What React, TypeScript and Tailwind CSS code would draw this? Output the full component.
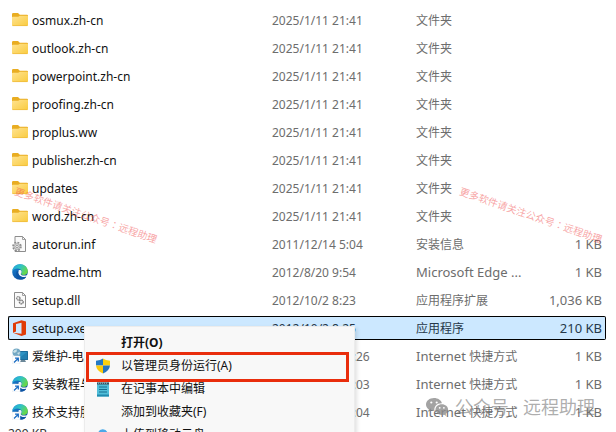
import type { ReactNode } from "react";

type Kind = "folder" | "inf" | "edge" | "dll" | "office" | "remote" | "edgelink";

interface Entry {
  name: string;
  date: string;
  type: string;
  size: string;
  kind: Kind;
  selected?: boolean;
}

const folders = [
  "osmux.zh-cn",
  "outlook.zh-cn",
  "powerpoint.zh-cn",
  "proofing.zh-cn",
  "proplus.ww",
  "publisher.zh-cn",
  "updates",
  "word.zh-cn",
];

const entries: Entry[] = [
  ...folders.map((name): Entry => ({ name, date: "2025/1/11 21:41", type: "文件夹", size: "", kind: "folder" })),
  { name: "autorun.inf", date: "2011/12/14 5:04", type: "安装信息", size: "1 KB", kind: "inf" },
  { name: "readme.htm", date: "2012/8/20 9:54", type: "Microsoft Edge ...", size: "1 KB", kind: "edge" },
  { name: "setup.dll", date: "2012/10/2 8:23", type: "应用程序扩展", size: "1,036 KB", kind: "dll" },
  { name: "setup.exe", date: "2012/10/2 8:25", type: "应用程序", size: "210 KB", kind: "office", selected: true },
  { name: "爱维护-电脑", date: "2024/11/11 10:26", type: "Internet 快捷方式", size: "1 KB", kind: "remote" },
  { name: "安装教程与", date: "2024/11/11 10:03", type: "Internet 快捷方式", size: "1 KB", kind: "edgelink" },
  { name: "技术支持服务", date: "2024/11/11 10:04", type: "Internet 快捷方式", size: "1 KB", kind: "edgelink" },
];

function Svg({ children }: { children: ReactNode }) {
  return (
    <svg viewBox="0 0 16 16" className="size-4 shrink-0" aria-hidden="true">
      {children}
    </svg>
  );
}

function EdgeShape() {
  return (
    <>
      <defs>
        <linearGradient id="edgeTop" x1="0" y1="0" x2="1" y2="0.5">
          <stop offset="0" stopColor="#249fe0" />
          <stop offset="0.5" stopColor="#2fc3c4" />
          <stop offset="1" stopColor="#68d849" />
        </linearGradient>
        <linearGradient id="edgeLow" x1="0" y1="0" x2="0.6" y2="1">
          <stop offset="0" stopColor="#1b8bd8" />
          <stop offset="1" stopColor="#0c4a9c" />
        </linearGradient>
      </defs>
      <circle cx="8" cy="8" r="7.8" fill="url(#edgeLow)" />
      <path d="M.3 7C.8 3 4 .2 8 .2c4.6 0 7.800 3.300 7.800 6.700 0 2.500-1.800 4-4.200 4-1.800 0-2.900-.6-2.500-1.400.3-.5.8-.9.8-1.900C9.900 5.700 7.800 4.400 5.400 4.400 3.100 4.400 1.200 5.400.3 7z" fill="url(#edgeTop)" />
      <path d="M6.300 7.200C5 10.500 8.500 14.300 14.200 12.800L16 15.200V10.500C14.600 11.500 13 11.700 11.600 11.600 8.800 11.500 8.400 9.900 9.100 9.300 10.200 8.300 9.700 6.500 8.300 6.100 7.300 5.900 6.600 6.400 6.300 7.200z" fill="#fff" opacity=".95" />
      <path d="M4.700 7.200C3 11 6 15.300 9.700 15.600c2 .1 3.800-1.200 4.500-2.800C9 14.200 5.500 10.800 6.500 7z" fill="#0d55a5" />
    </>
  );
}

function LinkBadge() {
  return (
    <>
      <rect x="0" y="8" width="8" height="8" fill="#fff" stroke="#d5dde5" strokeWidth=".5" />
      <path d="M2 14.500 5.800 10.700M3 10.200h3.300v3.300" fill="none" stroke="#1d6ec4" strokeWidth="1.300" />
    </>
  );
}

function FileIcon({ kind }: { kind: Kind }) {
  switch (kind) {
    case "folder":
      return (
        <Svg>
          <defs>
            <linearGradient id="folder" x1="0" y1="0" x2="1" y2="1">
              <stop offset="0" stopColor="#ffe391" />
              <stop offset="1" stopColor="#f9cb3f" />
            </linearGradient>
          </defs>
          <path d="M0 2.200Q0 1 1.200 1H6L7.800 2.800H15Q16 2.800 16 4V6H0z" fill="#e9ad22" />
          <path d="M0 5.500Q0 4.800.8 4.800H6.200L8 3.700H15.200Q16 3.700 16 4.500V13Q16 14 15 14H1Q0 14 0 13z" fill="url(#folder)" />
          <path d="M.5 13.600h15" stroke="#eeb93a" strokeWidth=".7" />
        </Svg>
      );
    case "inf":
      return (
        <Svg>
          <path d="M3 .5h7.500L13.500 3.500v12H3z" fill="#fafafa" stroke="#8d8d8d" />
          <path d="M10.500.5v3h3" fill="none" stroke="#8d8d8d" strokeWidth=".8" />
          <circle cx="5" cy="10.500" r="4" fill="#eee" stroke="#8b8b8b" strokeWidth="1.600" strokeDasharray="1.800 1.340" />
          <circle cx="5" cy="10.500" r="2.900" fill="#ddd" stroke="#999" strokeWidth=".7" />
          <circle cx="5" cy="10.500" r="1.200" fill="#fff" stroke="#888" strokeWidth=".8" />
        </Svg>
      );
    case "dll":
      return (
        <Svg>
          <path d="M2.500.5h8L13.500 3.500v12h-11z" fill="#fafafa" stroke="#8d8d8d" />
          <path d="M10.500.5v3h3" fill="none" stroke="#8d8d8d" strokeWidth=".8" />
          <circle cx="6.300" cy="6.300" r="1.700" fill="#eee" stroke="#888" strokeWidth="1.400" strokeDasharray="1.500 .5" />
          <circle cx="9.300" cy="10" r="1.900" fill="#eee" stroke="#777" strokeWidth="1.400" strokeDasharray="1.500 .5" />
        </Svg>
      );
    case "office":
      return (
        <Svg>
          <path d="M1 3.200 9.500.2 14 1.500v13L9.500 15.900 1 12.800 9.500 13.800V2.700L4 4v7.500L1 12.800z" fill="#e03c08" />
        </Svg>
      );
    case "remote":
      return (
        <Svg>
          <rect x="5" y="3" width="11" height="9" rx=".5" fill="#1b6c9c" />
          <path d="M6 4h9v7H6z" fill="#2d92c3" />
          <path d="M6 11 15 4v7z" fill="#2380b1" />
          <path d="M9 12h4l1 2H8z" fill="#6b8798" />
          <circle cx="4.500" cy="4.500" r="4" fill="#73a8c4" />
          <path d="M1 3.500Q3 1 5 1.500L4.500 4 2 5zM5 5l3-1-1 3z" fill="#c9e0e7" />
          <LinkBadge />
        </Svg>
      );
    case "edge":
      return (
        <Svg>
          <EdgeShape />
        </Svg>
      );
    case "edgelink":
      return (
        <Svg>
          <EdgeShape />
          <LinkBadge />
        </Svg>
      );
  }
}

function ShieldIcon() {
  return (
    <Svg>
      <path d="M8 .5Q5.500 2.600 1 2.700V7.500H8z" fill="#2479c4" />
      <path d="M8 .5Q10.500 2.600 15 2.700V7.500H8z" fill="#fbd00e" />
      <path d="M1 7.500Q1.500 12.800 8 15.500V7.500z" fill="#fbc90b" />
      <path d="M15 7.500Q14.500 12.800 8 15.500V7.500z" fill="#2674bd" />
    </Svg>
  );
}

function NotepadIcon() {
  return (
    <Svg>
      <rect x="2" y="1.500" width="12" height="14" fill="#50bed9" />
      <path d="M2 1.500h12v2H2z" fill="#34515f" />
      <path d="M3.500.5v2.500M5.500.5v2.500M7.500.5v2.500M9.500.5v2.500M11.500.5v2.500" stroke="#91a8b2" strokeWidth=".8" />
      <path d="M4 6h8M4 8.500h8M4 11h8" stroke="#176f8f" />
      <path d="M2 13.500h12v2H2z" fill="#218aae" />
    </Svg>
  );
}

function CloudIcon() {
  return (
    <Svg>
      <path d="M3.500 12A3 3 0 0 1 3 6 5 5 0 0 1 12.500 5.500 3.300 3.300 0 0 1 13 12z" fill="#4aa9e9" />
    </Svg>
  );
}

function WeChatIcon() {
  return (
    <svg viewBox="0 0 24 20" className="h-5 w-6" aria-hidden="true">
      <path
        fillRule="evenodd"
        d="M9 1C4.500 1 1 3.900 1 7.500c0 2.100 1.100 3.800 2.900 5L3.200 15l2.700-1.400c1 .3 2 .4 3.100.4h.5C8.500 9.500 12 6 16.900 6.200 16.200 3.200 12.900 1 9 1zM6.300 4.400a1.100 1.100 0 1 1 0 2.200 1.100 1.100 0 0 1 0-2.200zM11.700 4.400a1.100 1.100 0 1 1 0 2.200 1.100 1.100 0 0 1 0-2.200z"
      />
      <path
        fillRule="evenodd"
        d="M16.800 7.200c-3.500 0-6.300 2.400-6.300 5.400s2.800 5.400 6.300 5.400c.8 0 1.600-.1 2.300-.3l2.200 1.200-.6-2c1.500-1 2.400-2.600 2.400-4.300 0-3-2.800-5.400-6.300-5.400zM14.700 9.900a.9.9 0 1 1 0 1.800.9.9 0 0 1 0-1.800zM18.900 9.900a.9.9 0 1 1 0 1.800.9.9 0 0 1 0-1.800z"
      />
    </svg>
  );
}

/* Chinese runs are set one step smaller than the Latin text beside them. */
function Mixed({ text }: { text: string }) {
  return (
    <>
      {text.split(/([\u4e00-\u9fff]+)/).map((part, i) =>
        i % 2 ? (
          <span key={i} className="text-[12px]">
            {part}
          </span>
        ) : (
          part
        ),
      )}
    </>
  );
}

function FileRow({ entry }: { entry: Entry }) {
  const tone = entry.selected ? "border-y border-black bg-[#cce8ff] text-[#26384a]" : "text-[#6d6d6d]";
  return (
    <tr className="h-6">
      <td className={`${tone} w-66 p-0 ${entry.selected ? "rounded-l-xs border-l" : ""}`}>
        <div className={`flex items-center gap-1 text-[12px] text-[#111] ${entry.selected ? "pl-[3px]" : "pl-1"}`}>
          <FileIcon kind={entry.kind} />
          <span className="pt-0.5">{entry.name}</span>
        </div>
      </td>
      <td className={`${tone} w-36 px-0 pt-0.5 pb-0 text-[12px]`}>{entry.date}</td>
      <td className={`${tone} p-0`}>
        <Mixed text={entry.type} />
      </td>
      <td className={`${tone} w-20 p-0 text-right ${entry.selected ? "rounded-r-xs border-r pr-[3px]" : "pr-1"}`}>
        {entry.size}
      </td>
    </tr>
  );
}

function MenuItem({ icon, label, className = "" }: { icon?: ReactNode; label: string; className?: string }) {
  return (
    <button type="button" role="menuitem" className={`flex h-[23px] w-full items-center gap-2.5 pl-2.5 text-left ${className}`}>
      <span className="flex size-4 shrink-0">{icon}</span>
      {label}
    </button>
  );
}

function ContextMenu() {
  return (
    <div
      role="menu"
      className="absolute top-[326px] left-[84px] w-[271px] border border-[#ececec] bg-[#f8f8f8] pt-1 text-[12px] text-[#111] shadow-[2px_2px_4px_rgba(0,0,0,0.12)]"
    >
      <MenuItem label="打开(O)" className="font-bold" />
      <MenuItem icon={<ShieldIcon />} label="以管理员身份运行(A)" />
      <MenuItem icon={<NotepadIcon />} label="在记事本中编辑" />
      <MenuItem label="添加到收藏夹(F)" />
      <MenuItem icon={<CloudIcon />} label="上传到移动云盘" />
      <div className="pointer-events-none absolute top-[25px] left-px h-[30px] w-[263px] border-3 border-[#e92d0c]" />
    </div>
  );
}

function Stamp({ className }: { className: string }) {
  return (
    <div
      className={`pointer-events-none absolute origin-top-left rotate-[19deg] text-[10px] leading-3 whitespace-nowrap text-[#f04a4a]/50 ${className}`}
    >
      更多软件请关注公众号
      <span className="font-['Noto_Sans_CJK_TC',sans-serif]">：</span>
      远程助理
    </div>
  );
}

export default function App() {
  return (
    <main className="relative h-screen overflow-hidden bg-white font-['Noto_Sans','Noto_Sans_CJK_SC',sans-serif] text-[13px] leading-5">
      <div className="pt-1 pr-2.5 pl-2">
        <table className="w-full table-fixed border-separate border-spacing-x-0 border-spacing-y-1 whitespace-nowrap">
          <tbody>
            {entries.map((entry) => (
              <FileRow key={entry.name} entry={entry} />
            ))}
          </tbody>
        </table>
      </div>
      <footer className="pl-2 text-[12px] leading-3 text-[#333]">209 KB</footer>

      <Stamp className="top-[185px] left-[17px]" />
      <Stamp className="top-[185px] left-[462px]" />

      <ContextMenu />

      <div className="pointer-events-none absolute right-[21px] bottom-[11px] flex items-center gap-1.5 fill-[#8c8c8c]/80 text-[18px] leading-7 text-[#777]/60">
        <WeChatIcon />
        <span>公众号 · 远程助理</span>
      </div>
    </main>
  );
}
